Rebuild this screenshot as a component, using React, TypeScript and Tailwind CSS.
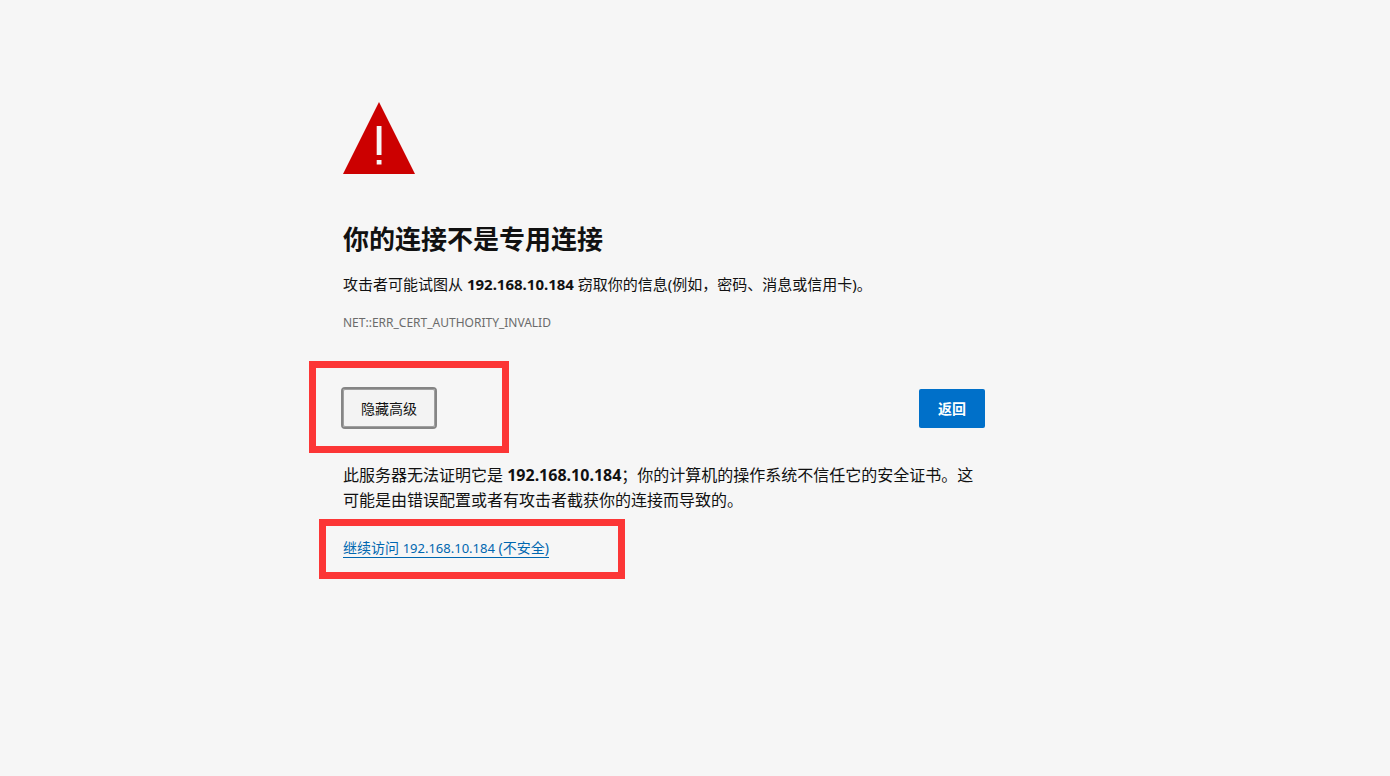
import type { ReactNode } from "react"

const host = "192.168.10.184"

function WarningIcon() {
    return (
        <svg width="72" height="72" viewBox="0 0 72 72" role="img" aria-label="警告">
            <path d="M36 0 72 72H0Z" fill="#cc0000" />
            <path d="M33.7 24h4.8v29h-4.8zM33.7 58h4.8v4.6h-4.8z" fill="#f6f6f6" />
        </svg>
    )
}

function Highlight({ className, children }: { className: string; children: ReactNode }) {
    return (
        <div className="relative w-fit">
            {children}
            <div className={`pointer-events-none absolute border-[7px] border-[#fc3636] ${className}`} />
        </div>
    )
}

export default function App() {
    return (
        <div className="min-h-screen bg-[#f6f6f6] px-6 font-['Noto_Sans','Noto_Sans_CJK_SC',sans-serif] text-[#111]">
            <main className="mx-auto max-w-[704px] pt-[102px] pr-[62px] pb-16">
                <WarningIcon />

                <h1 className="mt-[47px] text-[26px] leading-9 font-bold">你的连接不是专用连接</h1>
                <p className="mt-[15px] text-[15px] leading-6">
                    攻击者可能试图从 <strong>{host}</strong> 窃取你的信息(例如，密码、消息或信用卡)。
                </p>
                <p className="mt-[19px] text-xs leading-4 text-[#6b6b6b]">NET::ERR_CERT_AUTHORITY_INVALID</p>

                <div className="mt-[58px] flex items-start justify-between">
                    <Highlight className="-top-7 -left-[34px] h-[92px] w-[200px]">
                        <button
                            type="button"
                            className="block h-[38px] w-[92px] rounded-[2px] border border-[#a0a0a0] bg-[#f3f3f3] pt-px text-sm outline-2 outline-[#858585]"
                        >
                            隐藏高级
                        </button>
                    </Highlight>
                    <button
                        type="button"
                        className="h-[39px] w-[66px] rounded-[2px] bg-[#0070c9] text-sm font-bold text-white"
                    >
                        返回
                    </button>
                </div>

                <p className="mt-[35px] text-base leading-[25px]">
                    此服务器无法证明它是 <strong>{host}</strong>；你的计算机的操作系统不信任它的安全证书。这可能是由错误配置或者有攻击者截获你的连接而导致的。
                </p>

                <div className="mt-[26px]">
                    <Highlight className="-top-5 -left-6 h-[60px] w-[306px]">
                        <a href="#proceed" className="block border-b border-[#0067b0] text-sm leading-[18px] text-[#0067b0]">
                            继续访问 <span className="text-[13px]">{host}</span> (不安全)
                        </a>
                    </Highlight>
                </div>
            </main>
        </div>
    )
}
